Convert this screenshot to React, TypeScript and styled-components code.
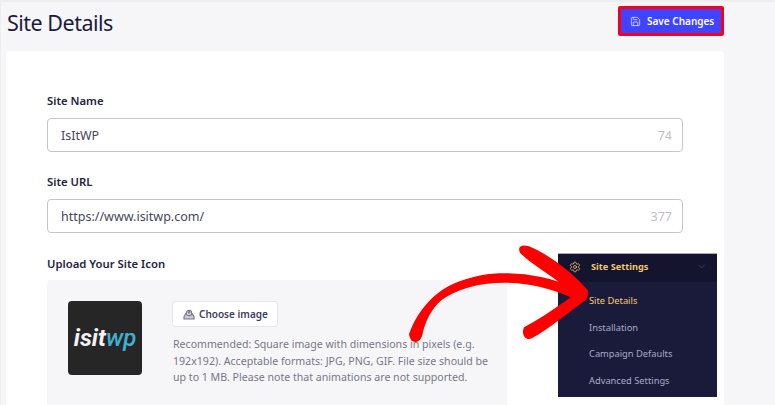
import styled, { createGlobalStyle } from 'styled-components'
import { ChevronDown, Save, Settings } from 'lucide-react'

const Global = createGlobalStyle`
  html, body {
    margin: 0;
    padding: 0;
    background: #f6f6f9;
  }
  * { box-sizing: border-box; }
`

const Page = styled.div`
  position: relative;
  width: 775px;
  height: 405px;
  overflow: hidden;
  background: #f6f6f9;
  border-top: 2px solid #eeeef1;
  border-left: 1px solid #eeeef1;
  padding: 0 51px 0 5px;
  font-family: 'Noto Sans', sans-serif;
  color: #1a1b3a;
`

const TopBar = styled.div`
  display: flex;
  align-items: flex-start;
  justify-content: space-between;
  height: 49px;
  padding-top: 4px;
`

const PageTitle = styled.h1`
  margin: 2px 0 0 1px;
  font-size: 21.5px;
  letter-spacing: -0.5px;
  line-height: 30px;
  font-weight: 400;
  color: #1a1b3a;
`

const SaveButton = styled.button`
  display: flex;
  align-items: center;
  gap: 6px;
  width: 106px;
  height: 30px;
  padding: 0 0 0 9px;
  background: #4043ff;
  border: 3px solid #f50018;
  border-radius: 2px;
  color: #fff;
  font-family: inherit;
  font-size: 10px;
  font-weight: 600;
  white-space: nowrap;
`

const Card = styled.div`
  height: 360px;
  padding: 41px 41px 0;
  background: #fff;
  border-radius: 4px 4px 0 0;
`

const Field = styled.div`
  display: flex;
  flex-direction: column;
  gap: 9px;
  margin-bottom: 21px;
`

const Label = styled.label`
  font-size: 11.3px;
  line-height: 17px;
  font-weight: 600;
  color: #23233f;
`

const InputBox = styled.div`
  display: flex;
  align-items: center;
  justify-content: space-between;
  height: 34px;
  padding: 0 10px 0 13px;
  border: 1px solid #c4c4d0;
  border-radius: 4px;
  font-size: 12.5px;
  color: #454560;
`

const Count = styled.span`
  font-size: 12.5px;
  color: #c0c0ca;
`

const UploadLabel = styled(Label)`
  display: block;
  margin-top: 22px;
  margin-bottom: 8px;
`

const UploadPanel = styled.div`
  display: flex;
  gap: 30px;
  width: 460px;
  height: 130px;
  padding: 21px 20px 0 21px;
  background: #f6f6f9;
  border-radius: 4px;
`

const Logo = styled.div`
  flex: none;
  display: flex;
  align-items: center;
  justify-content: center;
  width: 74px;
  height: 74px;
  background: #262626;
  border-radius: 4px;
  font-family: Roboto, sans-serif;
  font-size: 24px;
  font-weight: 700;
  font-style: italic;
  color: #f2f2f2;
`

const LogoAccent = styled.span`
  color: #3fb1d3;
  font-weight: 500;
`

const UploadBody = styled.div`
  display: flex;
  flex-direction: column;
  align-items: flex-start;
  gap: 9px;
`

const ChooseButton = styled.button`
  display: flex;
  align-items: center;
  gap: 4px;
  width: 106px;
  height: 26px;
  padding: 0 0 0 10px;
  background: #fff;
  border: 1px solid #e4e4ec;
  border-radius: 3px;
  font-family: inherit;
  font-size: 10px;
  font-weight: 600;
  color: #3e3e5c;
  white-space: nowrap;
`

const Hint = styled.p`
  margin: 0;
  width: 320px;
  padding-left: 1px;
  font-size: 10.6px;
  line-height: 16.7px;
  color: #777788;
`

const SideMenu = styled.div`
  position: absolute;
  left: 557px;
  top: 251px;
  width: 159px;
  height: 144px;
  background: #1a1b3a;
  border-top: 1px solid #a9a9bd;
`

const MenuHeader = styled.div`
  display: flex;
  align-items: center;
  gap: 10px;
  height: 28px;
  padding: 0 10px 3px 11px;
  background: #14142e;
  font-size: 9.2px;
  font-weight: 700;
  color: #f7c873;
`

const MenuTitle = styled.span`
  flex: 1;
`

const MenuList = styled.div`
  display: flex;
  flex-direction: column;
  padding: 6px 0 0 31px;
`

const MenuItem = styled.div<{ $active?: boolean }>`
  height: 26.7px;
  line-height: 26.7px;
  font-size: 9.3px;
  color: ${({ $active }) => ($active ? '#f7c873' : '#a9aac8')};
`

const ArrowSvg = styled.svg`
  position: absolute;
  left: 399px;
  top: 238px;
`

function DriveIcon() {
  return (
    <svg width="12" height="12" viewBox="0 0 12 12" fill="none" stroke="#77778a" strokeWidth="1.2">
      <path d="M1 8.5 3 5.5h6l2 3v2.5H1z" fill="#c9c9d4" />
      <circle cx="6" cy="5" r="2.6" fill="#f6f6f9" />
      <path d="M6 6V3.5M4.8 4.6 6 3.4l1.2 1.2" />
    </svg>
  )
}

function RedArrow() {
  return (
    <ArrowSvg width="375" height="165" viewBox="0 0 1125 495">
      <path
        fill="#fd0000"
        d="M27 283C50 215 105 150 175 125C240 100 300 95 375 103C410 108 445 115 475 125C435 95 385 65 360 38C352 22 362 12 385 18C440 40 510 90 563 150C566 165 562 175 555 182C500 220 450 265 395 295C378 303 362 285 372 262C415 240 465 205 512 172C450 145 395 130 315 128C230 128 165 150 125 180C95 205 75 245 67 285C60 312 32 315 27 283Z"
      />
    </ArrowSvg>
  )
}

export default function App() {
  return (
    <>
      <Global />
      <Page>
        <TopBar>
          <PageTitle>Site Details</PageTitle>
          <SaveButton>
            <Save size={11} strokeWidth={1.5} />
            Save Changes
          </SaveButton>
        </TopBar>
        <Card>
          <Field>
            <Label>Site Name</Label>
            <InputBox>
              IsItWP
              <Count>74</Count>
            </InputBox>
          </Field>
          <Field>
            <Label>Site URL</Label>
            <InputBox>
              https://www.isitwp.com/
              <Count>377</Count>
            </InputBox>
          </Field>
          <UploadLabel>Upload Your Site Icon</UploadLabel>
          <UploadPanel>
            <Logo>
              isit<LogoAccent>wp</LogoAccent>
            </Logo>
            <UploadBody>
              <ChooseButton>
                <DriveIcon />
                Choose image
              </ChooseButton>
              <Hint>
                Recommended: Square image with dimensions in pixels (e.g. 192x192). Acceptable
                formats: JPG, PNG, GIF. File size should be up to 1 MB. Please note that animations
                are not supported.
              </Hint>
            </UploadBody>
          </UploadPanel>
        </Card>
        <SideMenu>
          <MenuHeader>
            <Settings size={12} strokeWidth={1.5} />
            <MenuTitle>Site Settings</MenuTitle>
            <ChevronDown size={11} strokeWidth={1} color="#6b6c8a" />
          </MenuHeader>
          <MenuList>
            <MenuItem $active>Site Details</MenuItem>
            <MenuItem>Installation</MenuItem>
            <MenuItem>Campaign Defaults</MenuItem>
            <MenuItem>Advanced Settings</MenuItem>
          </MenuList>
        </SideMenu>
        <RedArrow />
      </Page>
    </>
  )
}
